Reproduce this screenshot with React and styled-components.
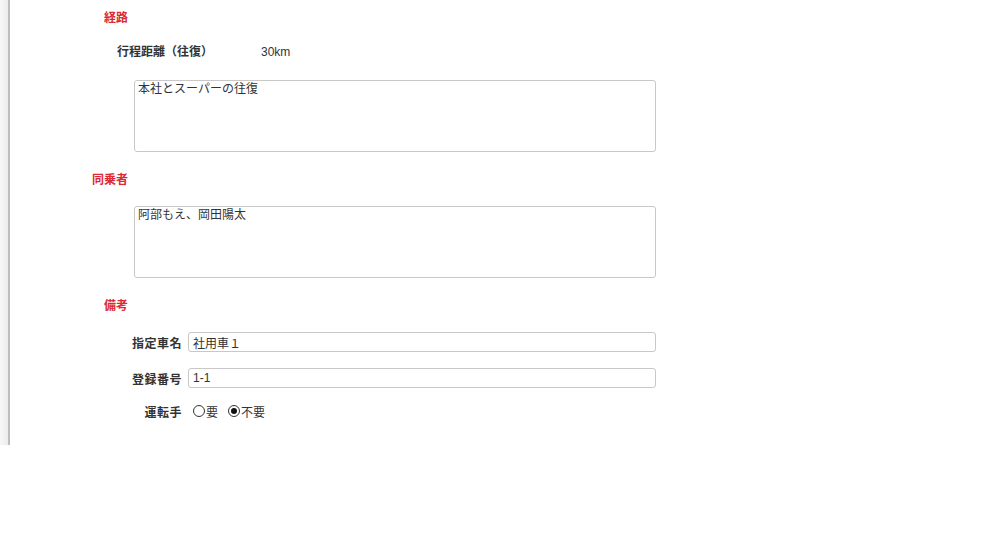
import React from "react";
import styled, { createGlobalStyle } from "styled-components";

const GlobalStyle = createGlobalStyle`
  body {
    margin: 0;
    background: #ffffff;
    font-family: "Liberation Sans", "Noto Sans CJK JP", sans-serif;
    font-size: 12px;
    color: #333333;
  }
`;

const Page = styled.div`
  display: flex;
  align-items: flex-start;
`;

const SideBar = styled.div`
  width: 8px;
  height: 445px;
  background: linear-gradient(to right, #f7f7f7, #ebebeb);
  border-right: 2px solid #bdbdbd;
  flex-shrink: 0;
`;

const Form = styled.div`
  display: flex;
  flex-direction: column;
`;

const SectionTitle = styled.div`
  width: 118px;
  height: 18px;
  line-height: 20px;
  margin-top: ${(p) => p.$top}px;
  text-align: right;
  font-weight: bold;
  color: #dd2a32;
`;

const InfoRow = styled.div`
  display: flex;
  height: 18px;
  line-height: 20px;
  margin-top: 16px;
  padding-left: 107px;
`;

const InfoLabel = styled.span`
  width: 144px;
  font-weight: bold;
`;

const InfoValue = styled.span`
  color: #333333;
`;

const TextArea = styled.textarea`
  display: block;
  box-sizing: border-box;
  width: 522px;
  height: 72px;
  margin: ${(p) => p.$top}px 0 0 124px;
  padding: 0 3px;
  border: 1px solid #c8c8c8;
  border-radius: 3px;
  resize: none;
  font-family: inherit;
  font-size: 12px;
  line-height: 16px;
  color: #333333;
  outline: none;
`;

const FieldRow = styled.div`
  display: flex;
  align-items: center;
  height: 20px;
  margin-top: ${(p) => p.$top}px;
`;

const FieldLabel = styled.label`
  width: 172px;
  margin-right: 6px;
  text-align: right;
  font-weight: bold;
  letter-spacing: 0.5px;
`;

const TextInput = styled.input`
  box-sizing: border-box;
  width: 468px;
  height: 20px;
  padding: 0 4px;
  border: 1px solid #c8c8c8;
  border-radius: 3px;
  font-family: inherit;
  font-size: 12px;
  color: #333333;
  outline: none;
`;

const RadioGroup = styled.div`
  display: flex;
  align-items: center;
  gap: 10px;
  padding-left: 5px;
`;

const RadioOption = styled.span`
  display: flex;
  align-items: center;
`;

const RadioDot = styled.span`
  box-sizing: border-box;
  width: 12px;
  height: 12px;
  margin-right: 1px;
  border: 1px solid #333333;
  border-radius: 50%;
  background: #ffffff;
  display: flex;
  align-items: center;
  justify-content: center;

  &::after {
    content: "";
    width: 6px;
    height: 6px;
    border-radius: 50%;
    background: ${(p) => (p.$checked ? "#111111" : "transparent")};
  }
`;

const App = () => {
  return (
    <Page>
      <GlobalStyle />
      <SideBar />
      <Form>
        <SectionTitle $top={8}>経路</SectionTitle>
        <InfoRow>
          <InfoLabel>行程距離（往復）</InfoLabel>
          <InfoValue>30km</InfoValue>
        </InfoRow>
        <TextArea $top={20} defaultValue="本社とスーパーの往復" />

        <SectionTitle $top={18}>同乗者</SectionTitle>
        <TextArea $top={18} defaultValue="阿部もえ、岡田陽太" />

        <SectionTitle $top={18}>備考</SectionTitle>
        <FieldRow $top={18}>
          <FieldLabel>指定車名</FieldLabel>
          <TextInput defaultValue="社用車１" />
        </FieldRow>
        <FieldRow $top={16}>
          <FieldLabel>登録番号</FieldLabel>
          <TextInput defaultValue="1-1" />
        </FieldRow>
        <FieldRow $top={13}>
          <FieldLabel>運転手</FieldLabel>
          <RadioGroup>
            <RadioOption>
              <RadioDot />要
            </RadioOption>
            <RadioOption>
              <RadioDot $checked />不要
            </RadioOption>
          </RadioGroup>
        </FieldRow>
      </Form>
    </Page>
  );
};

export default App;
